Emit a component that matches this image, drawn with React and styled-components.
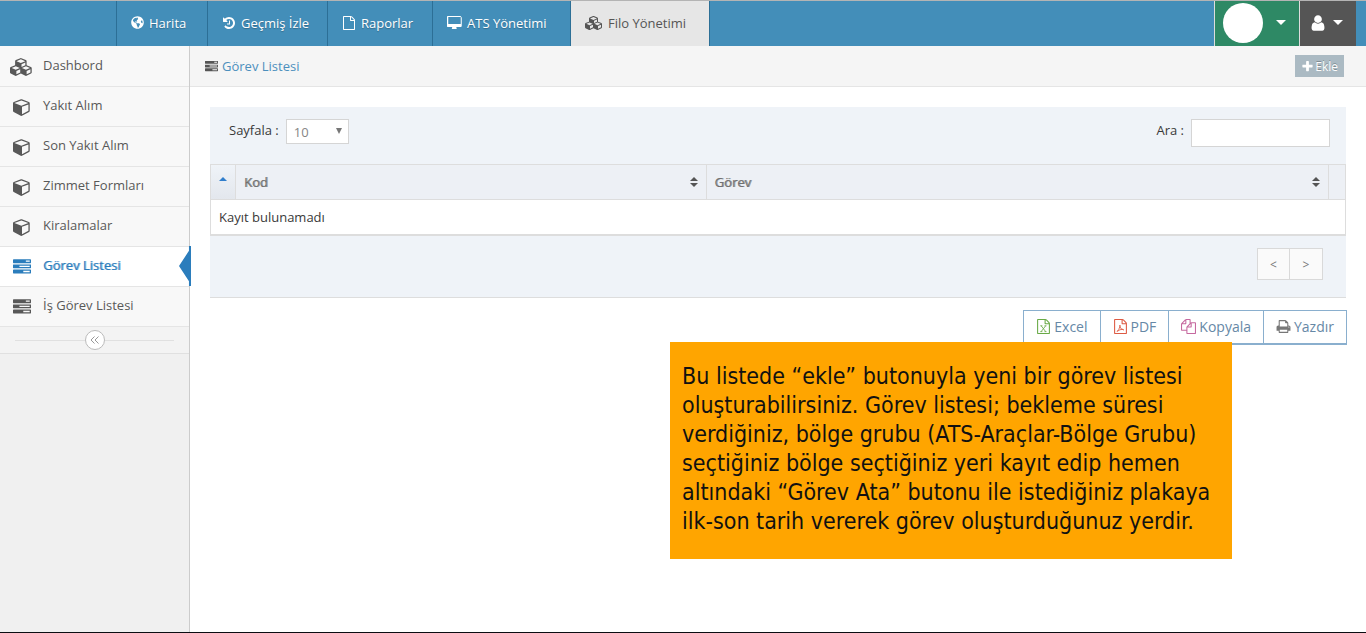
import React from "react";
import styled, { createGlobalStyle, css } from "styled-components";
import { FaGlobeAmericas } from "react-icons/fa";

const FILE_PATH =
  "M1596 380q28 28 48 76t20 88v1152q0 40-28 68t-68 28h-1344q-40 0-68-28t-28-68v-1600q0-40 28-68t68-28h896q40 0 88 20t76 48zm-444-244v376h376q-10-29-22-41l-313-313q-12-12-41-22zm384 1528v-1024h-416q-40 0-68-28t-28-68v-416h-768v1536h1280z";

const ICONS = {
  cube: {
    width: 1792,
    d: "M896 1629l640-349v-636l-640 233v752zm-64-865l698-254-698-254-698 254zm832-252v768q0 35-18 65t-49 47l-704 384q-28 16-61 16t-61-16l-704-384q-31-17-49-47t-18-65v-768q0-40 23-73t61-50l704-256q22-8 44-8t44 8l704 256q38 17 61 50t23 73z",
  },
  cubes: {
    width: 2304,
    d: "M640 1632l384-192v-314l-384 164v342zm-64-454l404-173-404-173-404 173zm1088 454l384-192v-314l-384 164v342zm-64-454l404-173-404-173-404 173zm-448-293l384-165v-266l-384 164v267zm-64-379l441-189-441-189-441 189zm1088 518v416q0 36-19 67t-52 47l-448 224q-25 14-57 14t-57-14l-448-224q-5-2-7-4-2 2-7 4l-448 224q-25 14-57 14t-57-14l-448-224q-33-16-52-47t-19-67v-416q0-38 21.5-70t56.5-48l434-186v-400q0-38 21.5-70t56.5-48l448-192q23-10 50-10t50 10l448 192q35 16 56.5 48t21.5 70v400l434 186q36 16 57 48t21 70z",
  },
  tasks: {
    width: 1792,
    d: "M1024 1408h640v-128h-640v128zm-384-512h1024v-128h-1024v128zm640-512h384v-128h-384v128zm512 832v256q0 26-19 45t-45 19h-1664q-26 0-45-19t-19-45v-256q0-26 19-45t45-19h1664q26 0 45 19t19 45zm0-512v256q0 26-19 45t-45 19h-1664q-26 0-45-19t-19-45v-256q0-26 19-45t45-19h1664q26 0 45 19t19 45zm0-512v256q0 26-19 45t-45 19h-1664q-26 0-45-19t-19-45v-256q0-26 19-45t45-19h1664q26 0 45 19t19 45z",
  },
  desktop: {
    width: 1856,
    d: "M1728 992v-832q0-13-9.5-22.5t-22.5-9.5h-1536q-13 0-22.5 9.5t-9.5 22.5v832q0 13 9.5 22.5t22.5 9.5h1536q13 0 22.5-9.5t9.5-22.5zm128-832v1088q0 66-47 113t-113 47h-544q0 37 16 77.5t32 71 16 43.5q0 26-19 45t-45 19h-512q-26 0-45-19t-19-45q0-14 16-44t32-70 16-78h-544q-66 0-113-47t-47-113v-1088q0-66 47-113t113-47h1536q66 0 113 47t47 113z",
  },
  history: {
    width: 1792,
    d: "M1664 896q0 156-61 298t-164 245-245 164-298 61q-172 0-327-72.5t-264-204.5q-7-10-6.5-22.5t8.5-20.5l137-138q10-9 25-9 16 2 23 12 73 95 179 147t225 52q104 0 198.5-40.5t163.5-109.5 109.5-163.5 40.5-198.5-40.5-198.5-109.5-163.5-163.5-109.5-198.5-40.5q-98 0-188 35.5t-160 101.5l137 138q31 30 14 69-17 40-59 40h-448q-26 0-45-19t-19-45v-448q0-42 40-59 39-17 69 14l130 129q107-101 244.5-156.5t284.5-55.5q156 0 298 61t245 164 164 245 61 298zm-640-288v448q0 14-9 23t-23 9h-320q-14 0-23-9t-9-23v-64q0-14 9-23t23-9h224v-352q0-14 9-23t23-9h64q14 0 23 9t9 23z",
  },
  user: {
    width: 1792,
    d: "M1536 1399q0 109-62.5 187t-150.5 78h-854q-88 0-150.5-78t-62.5-187q0-85 8.5-160.5t31.5-152 58.5-131 94-89 134.5-34.5q131 128 313 128t313-128q76 0 134.5 34.5t94 89 58.5 131 31.5 152 8.5 160.5zm-256-887q0 159-112.5 271.5t-271.5 112.5-271.5-112.5-112.5-271.5 112.5-271.5 271.5-112.5 271.5 112.5 112.5 271.5z",
  },
  plus: {
    width: 1792,
    d: "M1600 736v192q0 40-28 68t-68 28h-416v416q0 40-28 68t-68 28h-192q-40 0-68-28t-28-68v-416h-416q-40 0-68-28t-28-68v-192q0-40 28-68t68-28h416v-416q0-40 28-68t68-28h192q40 0 68 28t28 68v416h416q40 0 68 28t28 68z",
  },
  copy: {
    width: 1792,
    d: "M1696 384q40 0 68 28t28 68v1216q0 40-28 68t-68 28h-960q-40 0-68-28t-28-68v-288h-544q-40 0-68-28t-28-68v-672q0-40 20-88t48-76l408-408q28-28 76-48t88-20h416q40 0 68 28t28 68v328q68-40 128-40h416zm-544 213l-299 299h299v-299zm-640-384l-299 299h299v-299zm196 647l316-316v-416h-384v416q0 40-28 68t-68 28h-416v640h512v-256q0-40 20-88t48-76zm956 804v-1152h-384v416q0 40-28 68t-68 28h-416v640h896z",
  },
  print: {
    width: 1792,
    d: "M448 1536h896v-256h-896v256zm0-640h896v-384h-160q-40 0-68-28t-28-68v-160h-640v640zm1152 64q0-26-19-45t-45-19-45 19-19 45 19 45 45 19 45-19 19-45zm128 0v416q0 13-9.5 22.5t-22.5 9.5h-224v160q0 40-28 68t-68 28h-960q-40 0-68-28t-28-68v-160h-224q-13 0-22.5-9.5t-9.5-22.5v-416q0-79 56.5-135.5t135.5-56.5h64v-544q0-40 28-68t68-28h672q40 0 88 20t76 48l152 152q28 28 48 76t20 88v256h64q79 0 135.5 56.5t56.5 135.5z",
  },
  file: { width: 1792, d: FILE_PATH },
  excel: {
    width: 1792,
    d: FILE_PATH,
    mark: "M620 820L1150 1500M1150 820L620 1500M520 810h240M1010 810h240M520 1510h240M1010 1510h240",
  },
  pdf: {
    width: 1792,
    d: FILE_PATH,
    mark: "M480 1490Q720 1330 850 820Q860 640 800 780Q830 1200 1240 1310Q1370 1320 1180 1230Q840 1210 480 1490",
  },
};

const Icon = ({ name, size = 14 }) => {
  const { width, d, mark } = ICONS[name];
  return (
    <StIcon
      viewBox={`0 0 ${width} 1792`}
      width={Math.round((size * width) / 1792)}
      height={size}
      aria-hidden="true"
    >
      <path d={d} />
      {mark && <path d={mark} fill="none" stroke="currentColor" strokeWidth="100" />}
    </StIcon>
  );
};

const Caret = () => (
  <StIcon viewBox="0 0 10 5" width="10" height="5" aria-hidden="true">
    <path d="M0 0h10L5 5z" />
  </StIcon>
);

const SortIcon = () => (
  <StIcon viewBox="0 0 8 10" width="8" height="10" aria-hidden="true">
    <path d="M0 4L4 0l4 4zM0 6h8l-4 4z" />
  </StIcon>
);

const tabs = [
  { label: "Harita", icon: "globe", width: 91 },
  { label: "Geçmiş İzle", icon: "history", width: 120 },
  { label: "Raporlar", icon: "file", width: 105 },
  { label: "ATS Yönetimi", icon: "desktop", width: 138 },
  { label: "Filo Yönetimi", icon: "cubes", width: 140, active: true },
];

const menu = [
  { label: "Dashbord", icon: "cubes" },
  { label: "Yakıt Alım", icon: "cube" },
  { label: "Son Yakıt Alım", icon: "cube" },
  { label: "Zimmet Formları", icon: "cube" },
  { label: "Kiralamalar", icon: "cube" },
  { label: "Görev Listesi", icon: "tasks", active: true },
  { label: "İş Görev Listesi", icon: "tasks" },
];

const exportsList = [
  { label: "Excel", icon: "excel", color: "#69aa46" },
  { label: "PDF", icon: "pdf", color: "#dd5a43" },
  { label: "Kopyala", icon: "copy", color: "#c6699f" },
  { label: "Yazdır", icon: "print", color: "#777777" },
];

const App = () => {
  return (
    <>
      <GlobalStyle />
      <StPage>
        <StNavbar>
          <StTabs>
            {tabs.map((tab) => (
              <StTab href="#" key={tab.label} $active={tab.active} $width={tab.width}>
                {tab.icon === "globe" ? (
                  <FaGlobeAmericas width={14} height={12} />
                ) : (
                  <Icon name={tab.icon} />
                )}
                <span>{tab.label}</span>
              </StTab>
            ))}
          </StTabs>
          <StAccount $color="#2e8965" $width={85} $inset={8} aria-label="Hesap">
            <StAvatar />
            <Caret />
          </StAccount>
          <StAccount $color="#555555" $width={57} $inset={9} aria-label="Kullanıcı">
            <Icon name="user" size={18} />
            <Caret />
          </StAccount>
        </StNavbar>

        <StBody>
          <StSidebar>
            {menu.map((item) => (
              <StMenuItem href="#" key={item.label} $active={item.active}>
                <StMenuIcon>
                  <Icon name={item.icon} size={18} />
                </StMenuIcon>
                {item.label}
              </StMenuItem>
            ))}
            <StCollapse>
              <StCollapseButton aria-label="Menüyü daralt">
                <svg width="9" height="8" viewBox="0 0 9 8" fill="none" stroke="currentColor">
                  <path d="M4.5 0.5L1 4l3.5 3.5M8.5 0.5L5 4l3.5 3.5" />
                </svg>
              </StCollapseButton>
            </StCollapse>
          </StSidebar>

          <StContent>
            <StBreadcrumb>
              <StCrumb>
                <Icon name="tasks" size={13} />
                <a href="#">Görev Listesi</a>
              </StCrumb>
              <StAddButton>
                <Icon name="plus" size={13} />
                Ekle
              </StAddButton>
            </StBreadcrumb>

            <StMain>
              <StToolbar>
                <StField htmlFor="pageSize">
                  Sayfala :
                  <StSelectWrap>
                    <StSelect id="pageSize" defaultValue="10">
                      <option>10</option>
                      <option>25</option>
                      <option>50</option>
                    </StSelect>
                    <StSelectArrow viewBox="0 0 6 6" width="6" height="6" aria-hidden="true">
                      <path d="M0 0h6L3 6z" />
                    </StSelectArrow>
                  </StSelectWrap>
                </StField>
                <StField htmlFor="search">
                  Ara :
                  <StSearch id="search" type="text" />
                </StField>
              </StToolbar>

              <StTable>
                <colgroup>
                  <StCol $width="25px" />
                  <StCol $width="41.5%" />
                  <StCol />
                  <StCol $width="16px" />
                </colgroup>
                <thead>
                  <tr>
                    <StTh $sorted>
                      <StIcon viewBox="0 0 8 4" width="8" height="4" aria-hidden="true">
                        <path d="M0 4L4 0l4 4z" />
                      </StIcon>
                    </StTh>
                    <StTh>
                      <StThInner>
                        Kod
                        <SortIcon />
                      </StThInner>
                    </StTh>
                    <StTh>
                      <StThInner>
                        Görev
                        <SortIcon />
                      </StThInner>
                    </StTh>
                    <StTh />
                  </tr>
                </thead>
                <tbody>
                  <tr>
                    <StTd colSpan={4}>Kayıt bulunamadı</StTd>
                  </tr>
                </tbody>
              </StTable>

              <StFooter>
                <StPageButton>&lt;</StPageButton>
                <StPageButton>&gt;</StPageButton>
              </StFooter>

              <StExports>
                {exportsList.map((item) => (
                  <StExportButton key={item.label} $color={item.color}>
                    <Icon name={item.icon} size={15} />
                    {item.label}
                  </StExportButton>
                ))}
              </StExports>
            </StMain>
          </StContent>
        </StBody>

        <StNote>
          Bu listede “ekle” butonuyla yeni bir görev listesi
          <br />
          oluşturabilirsiniz. Görev listesi; bekleme süresi
          <br />
          verdiğiniz, bölge grubu (ATS-Araçlar-Bölge Grubu)
          <br />
          seçtiğiniz bölge seçtiğiniz yeri kayıt edip hemen
          <br />
          altındaki “Görev Ata” butonu ile istediğiniz plakaya
          <br />
          ilk-son tarih vererek görev oluşturduğunuz yerdir.
        </StNote>
      </StPage>
    </>
  );
};

export default App;

const GlobalStyle = createGlobalStyle`
  * {
    box-sizing: border-box;
  }
  body {
    margin: 0;
    background-color: #ffffff;
    color: #393939;
    font-family: "Open Sans", sans-serif;
    font-size: 13px;
    line-height: 20px;
  }
  a {
    color: inherit;
    text-decoration: none;
  }
  button,
  input,
  select {
    font-family: inherit;
    font-size: 13px;
    margin: 0;
    border-radius: 0;
  }
  button {
    cursor: pointer;
  }
`;

const StIcon = styled.svg`
  flex: none;
  fill: currentColor;
`;

const StPage = styled.div`
  position: relative;
  display: flex;
  flex-direction: column;
  min-height: 100vh;
  border-bottom: 1px solid #0b0d12;
`;

const StNavbar = styled.header`
  display: flex;
  height: 46px;
  padding-right: 10px;
  background-color: #438eb9;
  border-top: 1px solid #b4b4b4;
`;

const StTabs = styled.nav`
  display: flex;
  flex: 1;
  padding-left: 116px;
`;

const StTab = styled.a`
  display: flex;
  align-items: center;
  gap: 5px;
  width: ${({ $width }) => $width}px;
  padding: 0 0 2px 14px;
  border-left: 1px solid #2c6f96;
  color: #ffffff;
  text-shadow: 0 1px 1px rgba(0, 0, 0, 0.25);
  white-space: nowrap;
  &:last-child {
    border-right: 1px solid #2c6f96;
  }
  ${({ $active }) =>
    $active &&
    css`
      background-color: #e6e6e6;
      color: #555555;
      text-shadow: none;
    `}
`;

const StAccount = styled.button`
  display: flex;
  align-items: center;
  justify-content: space-between;
  width: ${({ $width }) => $width}px;
  padding: 0 13px 2px ${({ $inset }) => $inset}px;
  border: none;
  border-left: 1px solid #dddddd;
  background-color: ${({ $color }) => $color};
  color: #ffffff;
`;

const StAvatar = styled.span`
  width: 40px;
  height: 40px;
  border-radius: 50%;
  background-color: #ffffff;
`;

const StBody = styled.div`
  display: flex;
  flex: 1;
`;

const StSidebar = styled.aside`
  width: 190px;
  background-color: #f0f0f0;
  border-right: 1px solid #cccccc;
`;

const StMenuItem = styled.a`
  position: relative;
  display: flex;
  align-items: center;
  height: 40px;
  padding-bottom: 3px;
  background-color: #f8f8f8;
  border-bottom: 1px solid #e5e5e5;
  color: #585858;
  &:first-child {
    height: 41px;
  }
  ${({ $active }) =>
    $active &&
    css`
      background-color: #ffffff;
      color: #2b7dbc;
      text-shadow: 1px 0 0 rgba(43, 125, 188, 0.6);
      &::before {
        content: "";
        position: absolute;
        top: -1px;
        right: -2px;
        width: 12px;
        height: 40px;
        background-color: #2b7dbc;
        clip-path: polygon(83% 0, 100% 0, 100% 100%, 83% 100%, 83% 88%, 0 50%, 83% 12%);
      }
    `}
`;

const StMenuIcon = styled.span`
  display: flex;
  align-items: center;
  justify-content: center;
  width: 43px;
  padding-top: 4px;
`;

const StCollapse = styled.div`
  display: flex;
  align-items: center;
  height: 27px;
  padding: 0 15px;
  background-color: #f3f3f3;
  border-bottom: 1px solid #e0e0e0;
  &::before,
  &::after {
    content: "";
    flex: 1;
    border-top: 1px solid #e0e0e0;
  }
`;

const StCollapseButton = styled.button`
  display: flex;
  align-items: center;
  justify-content: center;
  width: 20px;
  height: 20px;
  padding: 0;
  border: 1px solid #bbbbbb;
  border-radius: 50%;
  background-color: #ffffff;
  color: #999999;
`;

const StContent = styled.main`
  flex: 1;
  min-width: 0;
`;

const StBreadcrumb = styled.div`
  display: flex;
  align-items: center;
  justify-content: space-between;
  height: 41px;
  padding: 0 22px 0 15px;
  background-color: #f5f5f5;
  border-bottom: 1px solid #e5e5e5;
`;

const StCrumb = styled.div`
  display: flex;
  align-items: center;
  gap: 4px;
  color: #555555;
  a {
    color: #4c8fbd;
  }
`;

const StAddButton = styled.button`
  display: flex;
  align-items: center;
  gap: 1px;
  height: 22px;
  padding: 0 6px;
  border: none;
  background-color: #abbac3;
  color: #ffffff;
  font-size: 12px;
  text-shadow: 0 -1px 0 rgba(0, 0, 0, 0.25);
`;

const StMain = styled.div`
  padding: 20px;
`;

const StToolbar = styled.div`
  display: flex;
  align-items: flex-start;
  justify-content: space-between;
  height: 57px;
  padding: 12px 16px 0 19px;
  background-color: #eff3f8;
`;

const StField = styled.label`
  display: flex;
  align-items: flex-start;
  gap: 7px;
  line-height: 23px;
`;

const StSelectWrap = styled.span`
  position: relative;
  display: flex;
`;

const StSelect = styled.select`
  appearance: none;
  width: 63px;
  height: 25px;
  padding: 0 7px;
  border: 1px solid #d5d5d5;
  background-color: #ffffff;
  color: #858585;
`;

const StSelectArrow = styled.svg`
  position: absolute;
  top: 9px;
  right: 7px;
  fill: #777777;
  pointer-events: none;
`;

const StSearch = styled.input`
  width: 139px;
  height: 28px;
  padding: 0 6px;
  border: 1px solid #d5d5d5;
  background-color: #ffffff;
`;

const StTable = styled.table`
  width: 100%;
  table-layout: fixed;
  border-collapse: separate;
  border-spacing: 0;
  border: 1px solid #dddddd;
`;

const StCol = styled.col`
  width: ${({ $width }) => $width || "auto"};
`;

const StTh = styled.th`
  height: 35px;
  padding: 0 8px;
  border-right: 1px solid #dddddd;
  border-bottom: 1px solid #dddddd;
  background-color: #edf0f5;
  color: #707070;
  font-weight: 400;
  text-align: left;
  text-shadow: 1px 0 0 rgba(112, 112, 112, 0.7);
  &:last-child {
    border-right: none;
  }
  ${({ $sorted }) =>
    $sorted &&
    css`
      padding: 0 0 12px;
      background: linear-gradient(to bottom, #eff3f8, #e3e7ed);
      color: #307ecc;
      text-align: center;
      line-height: 8px;
    `}
`;

const StThInner = styled.div`
  display: flex;
  align-items: center;
  justify-content: space-between;
  svg {
    color: #555555;
  }
`;

const StTd = styled.td`
  height: 35px;
  padding: 0 8px;
  border-bottom: 1px solid #dddddd;
`;

const StFooter = styled.div`
  display: flex;
  align-items: flex-start;
  justify-content: flex-end;
  height: 62px;
  padding: 12px 23px 0;
  background-color: #eff3f8;
  border-bottom: 1px solid #dddddd;
`;

const StPageButton = styled.button`
  width: 33px;
  height: 32px;
  padding: 0;
  border: 1px solid #d9d9d9;
  background-color: #fafafa;
  color: #777777;
  font-size: 12px;
  & + & {
    border-left: none;
  }
`;

const StExports = styled.div`
  display: flex;
  justify-content: flex-end;
  margin-right: -1px;
  padding-top: 12px;
`;

const StExportButton = styled.button`
  display: flex;
  align-items: center;
  gap: 3px;
  height: 35px;
  padding: 0 12px 2px;
  border: 1px solid #8aafce;
  border-bottom-width: 2px;
  background-color: #ffffff;
  color: #6688a6;
  font-size: 14px;
  svg {
    color: ${({ $color }) => $color};
  }
  & + & {
    border-left: none;
  }
`;

const StNote = styled.div`
  position: absolute;
  top: 342px;
  right: 134px;
  width: 562px;
  height: 217px;
  padding: 20px 12px;
  background-color: #ffa500;
  color: #111111;
  font-family: "DejaVu Sans Condensed", "DejaVu Sans", sans-serif;
  font-size: 23px;
  line-height: 29px;
  white-space: nowrap;
`;
